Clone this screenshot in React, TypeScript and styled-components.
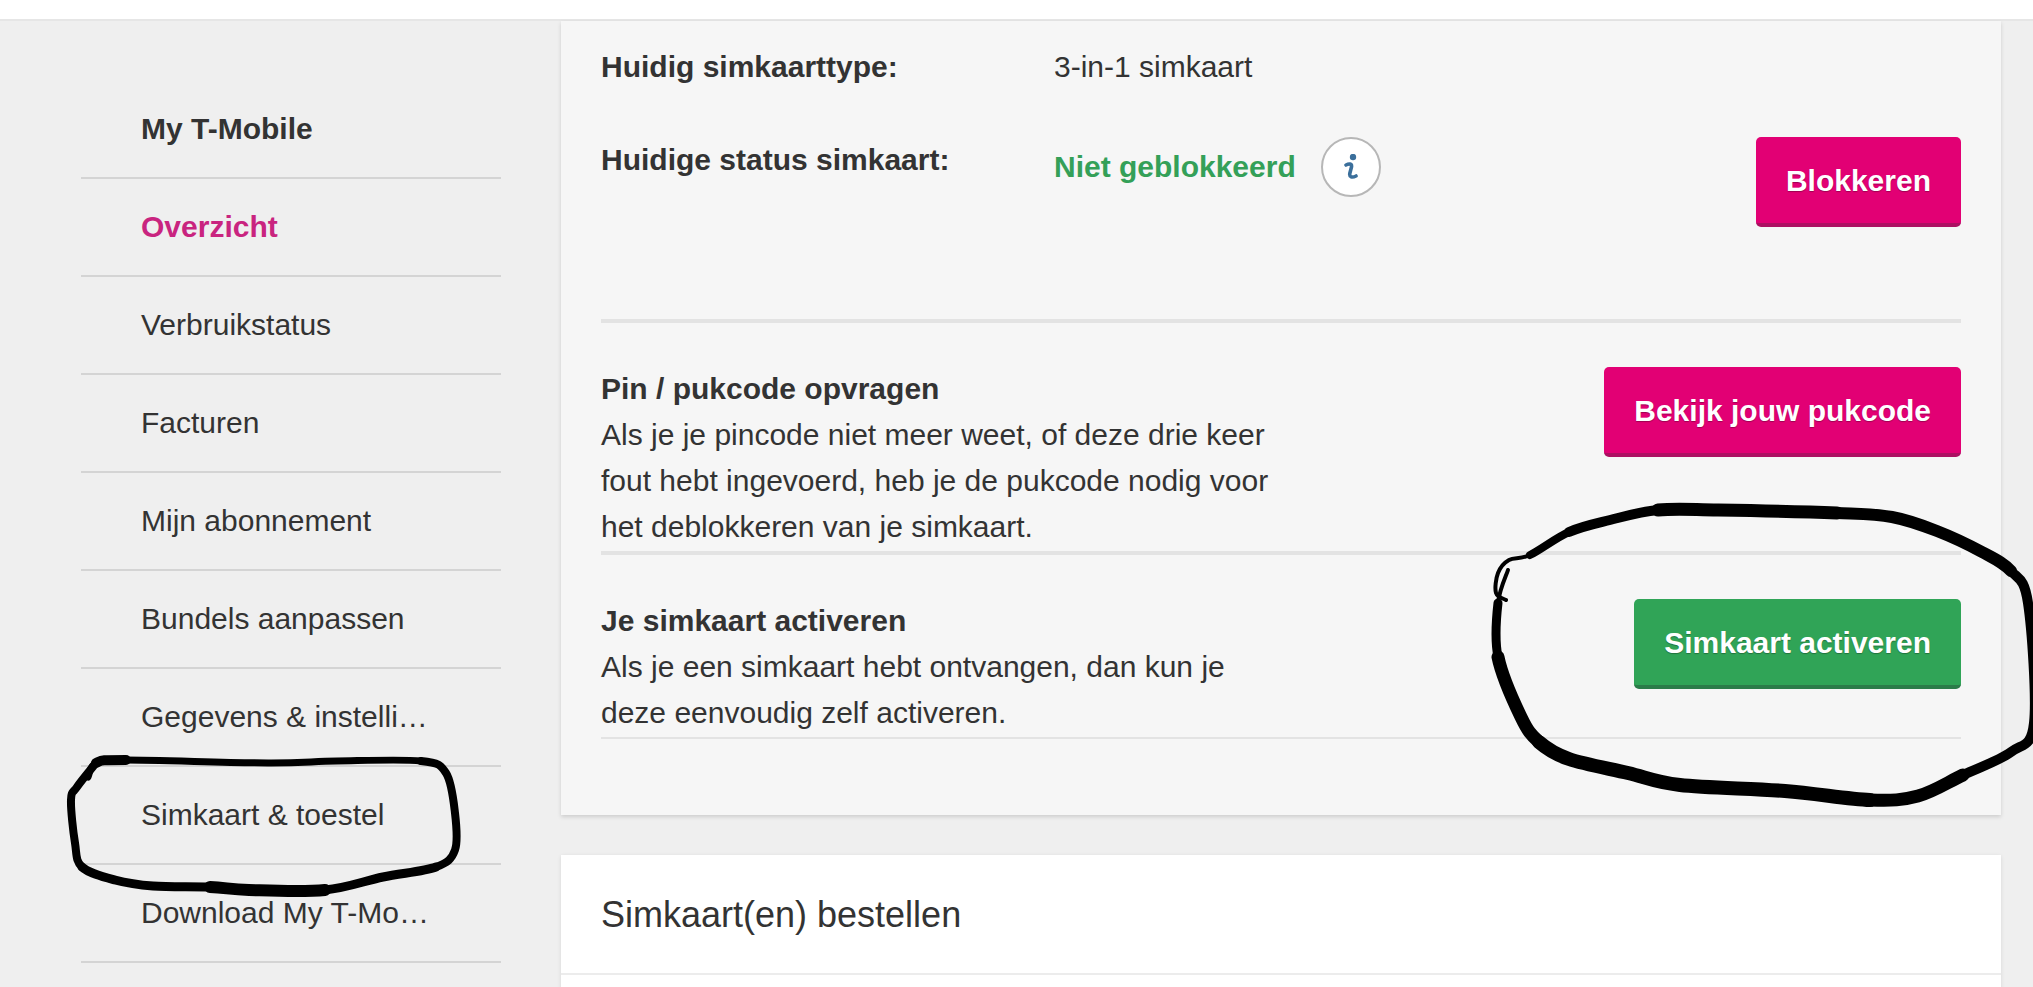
import React from 'react';
import styled, { createGlobalStyle } from 'styled-components';

const GlobalStyle = createGlobalStyle`
  html, body {
    margin: 0;
    padding: 0;
    background: #efefef;
  }
  * {
    box-sizing: border-box;
  }
`;

const Page = styled.div`
  position: relative;
  width: 2033px;
  height: 987px;
  overflow: hidden;
  background: #efefef;
  color: #333333;
  font-family: "Liberation Sans", Arial, sans-serif;
  font-size: 30px;
`;

const TopBar = styled.header`
  height: 21px;
  background: #ffffff;
  border-bottom: 2px solid #e6e6e6;
`;

const Columns = styled.div`
  display: flex;
  align-items: flex-start;
`;

const Sidebar = styled.nav`
  width: 561px;
  flex: none;
  padding: 60px 60px 0 81px;
`;

const NavItem = styled.div<{ $bold?: boolean; $active?: boolean }>`
  height: 98px;
  padding: 0 72px 0 60px;
  line-height: 96px;
  border-bottom: 2px solid #d4d4d4;
  font-weight: ${(p) => (p.$bold || p.$active ? 700 : 400)};
  color: ${(p) => (p.$active ? '#c9247f' : '#333333')};
  white-space: nowrap;
  overflow: hidden;
  text-overflow: ellipsis;
`;

const Main = styled.main`
  width: 1440px;
  flex: none;
  display: flex;
  flex-direction: column;
  gap: 40px;
`;

const StatusCard = styled.section`
  height: 794px;
  padding: 0 40px;
  background: #f6f6f6;
  box-shadow: 0 2px 4px rgba(0, 0, 0, 0.14);
`;

const OrderCard = styled.section`
  min-height: 200px;
  background: #ffffff;
  box-shadow: 0 1px 4px rgba(0, 0, 0, 0.1);
`;

const OrderTitle = styled.h2`
  margin: 0;
  height: 120px;
  padding: 1px 40px 0;
  line-height: 118px;
  font-size: 36px;
  font-weight: 400;
  border-bottom: 2px solid #ececec;
`;

const StatusBlock = styled.div`
  padding: 23px 0 92px;
  border-bottom: 4px solid #e3e3e3;
`;

const StatusRow = styled.div`
  display: flex;
  align-items: flex-start;
  line-height: 46px;
  margin-bottom: 47px;

  &:last-child {
    margin-bottom: 0;
  }
`;

const StatusLabel = styled.div`
  width: 453px;
  flex: none;
  font-weight: 700;
`;

const StatusValue = styled.div`
  display: flex;
  align-items: center;
  gap: 25px;
  height: 60px;
  flex: 1;
`;

const GreenText = styled.span`
  color: #34a058;
  font-weight: 700;
`;

const InfoBadge = styled.span`
  width: 60px;
  height: 60px;
  flex: none;
  display: flex;
  align-items: center;
  justify-content: center;
  border: 2px solid #b7b7b7;
  border-radius: 50%;
  background: #ffffff;
`;

const ActionBlock = styled.div<{ $rule: number }>`
  display: flex;
  justify-content: space-between;
  align-items: flex-start;
  padding-top: 44px;
  border-bottom: ${(p) => p.$rule}px solid #e3e3e3;
`;

const ActionText = styled.div`
  width: 690px;
  margin-top: -1px;
  padding-bottom: 1px;
  line-height: 46px;
`;

const ActionTitle = styled.div`
  font-weight: 700;
`;

const Button = styled.button<{ $green?: boolean }>`
  height: 90px;
  padding: 2px 30px 0;
  flex: none;
  border: 0;
  border-bottom: 4px solid ${(p) => (p.$green ? '#2b7c49' : '#ac0f62')};
  border-radius: 5px;
  background: ${(p) => (p.$green ? '#30a457' : '#e20074')};
  color: #ffffff;
  font-family: inherit;
  font-size: 30px;
  font-weight: 700;
  text-shadow: 0 1px 1px rgba(0, 0, 0, 0.3);
`;

const Scribbles = styled.svg`
  position: absolute;
  left: 0;
  top: 0;
  pointer-events: none;
`;

type Pt = [number, number];
type Stroke = [number, number, number];

// catmull-rom through the hand drawn points, one bezier per point pair
const curve = (pts: Pt[], from: number, to: number) => {
  let d = `M${pts[from][0]} ${pts[from][1]}`;
  for (let i = from; i < to; i += 1) {
    const p0 = pts[Math.max(i - 1, 0)];
    const p1 = pts[i];
    const p2 = pts[i + 1];
    const p3 = pts[Math.min(i + 2, pts.length - 1)];
    const c1 = [p1[0] + (p2[0] - p0[0]) / 6, p1[1] + (p2[1] - p0[1]) / 6];
    const c2 = [p2[0] - (p3[0] - p1[0]) / 6, p2[1] - (p3[1] - p1[1]) / 6];
    d += ` C${c1[0]} ${c1[1]} ${c2[0]} ${c2[1]} ${p2[0]} ${p2[1]}`;
  }
  return d;
};

const navCircle: Pt[] = [
  [88, 777], [96, 763], [126, 760], [268, 763], [337, 761], [421, 761], [446, 773], [455, 813],
  [455, 850], [436, 867], [383, 877], [325, 890], [249, 890], [210, 887], [153, 886], [115, 880],
  [82, 867], [75, 843], [71, 800], [77, 787], [96, 763],
];

const navStrokes: Stroke[] = [
  [0, 1, 7],
  [1, 2, 10],
  [2, 5, 7],
  [5, 9, 8],
  [9, 11, 9],
  [11, 13, 12],
  [13, 16, 9],
  [16, 20, 8],
];

const buttonCircle: Pt[] = [
  [1506, 600], [1496, 593], [1498, 573], [1509, 560], [1530, 555], [1569, 532], [1610, 520],
  [1658, 510], [1718, 510], [1837, 513], [1892, 517], [1937, 531], [1982, 552], [2011, 571],
  [2028, 603], [2034, 723], [2011, 752], [1963, 775], [1918, 796], [1870, 800], [1785, 791],
  [1680, 785], [1628, 773], [1569, 759], [1539, 742], [1521, 717], [1498, 657], [1498, 603],
  [1508, 570],
];

// [first point, last point, stroke width], the pen gets heavier along the top and bottom
const buttonStrokes: Stroke[] = [
  [0, 4, 4],
  [4, 5, 8],
  [5, 7, 10],
  [7, 9, 13],
  [9, 13, 12],
  [13, 17, 10],
  [17, 19, 13],
  [19, 24, 14],
  [24, 26, 13],
  [26, 27, 9],
  [27, 28, 4],
];

const InfoIcon = () => (
  <svg width="14" height="26" viewBox="0 0 14 26" aria-hidden="true">
    <circle cx="9" cy="3" r="3.2" fill="#3b6f9b" />
    <path d="M2 11 C5 9.5 8 9.5 7.5 13 L5.8 19.5 C5.2 23 8 24 12 22" fill="none" stroke="#3b6f9b" strokeWidth="3.6" strokeLinecap="round" />
  </svg>
);

const navItems = [
  'Verbruikstatus',
  'Facturen',
  'Mijn abonnement',
  'Bundels aanpassen',
  'Gegevens & instellingen',
  'Simkaart & toestel',
  'Download My T-Mobile app',
];

export default function App() {
  return (
    <Page>
      <GlobalStyle />
      <TopBar />
      <Columns>
        <Sidebar>
          <NavItem $bold>My T-Mobile</NavItem>
          <NavItem $active>Overzicht</NavItem>
          {navItems.map((item) => (
            <NavItem key={item}>{item}</NavItem>
          ))}
        </Sidebar>
        <Main>
          <StatusCard>
            <StatusBlock>
              <StatusRow>
                <StatusLabel>Huidig simkaarttype:</StatusLabel>
                <div>3-in-1 simkaart</div>
              </StatusRow>
              <StatusRow>
                <StatusLabel>Huidige status simkaart:</StatusLabel>
                <StatusValue>
                  <GreenText>Niet geblokkeerd</GreenText>
                  <InfoBadge>
                    <InfoIcon />
                  </InfoBadge>
                </StatusValue>
                <Button>Blokkeren</Button>
              </StatusRow>
            </StatusBlock>
            <ActionBlock $rule={4}>
              <ActionText>
                <ActionTitle>Pin / pukcode opvragen</ActionTitle>
                Als je je pincode niet meer weet, of deze drie keer fout hebt ingevoerd, heb je de pukcode nodig voor het deblokkeren van je simkaart.
              </ActionText>
              <Button>Bekijk jouw pukcode</Button>
            </ActionBlock>
            <ActionBlock $rule={2}>
              <ActionText>
                <ActionTitle>Je simkaart activeren</ActionTitle>
                Als je een simkaart hebt ontvangen, dan kun je deze eenvoudig zelf activeren.
              </ActionText>
              <Button $green>Simkaart activeren</Button>
            </ActionBlock>
          </StatusCard>
          <OrderCard>
            <OrderTitle>Simkaart(en) bestellen</OrderTitle>
          </OrderCard>
        </Main>
      </Columns>
      <Scribbles width="2033" height="987" viewBox="0 0 2033 987" fill="none" stroke="#000000" strokeLinecap="round" strokeLinejoin="round">
        {navStrokes.map(([from, to, width]) => (
          <path key={from} d={curve(navCircle, from, to)} strokeWidth={width} />
        ))}
        {buttonStrokes.map(([from, to, width]) => (
          <path key={from} d={curve(buttonCircle, from, to)} strokeWidth={width} />
        ))}
      </Scribbles>
    </Page>
  );
}
